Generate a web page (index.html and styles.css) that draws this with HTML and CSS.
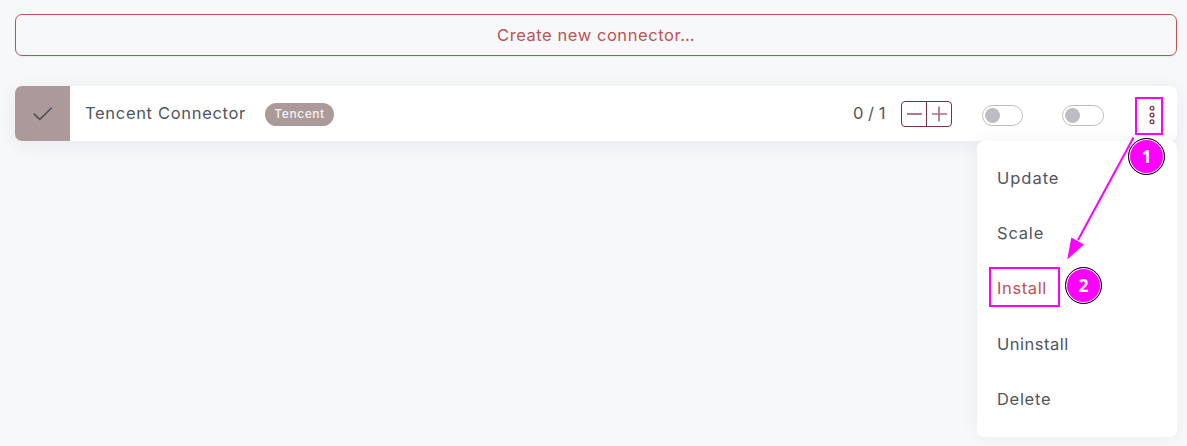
FILE: index.html
```html
<!DOCTYPE html>
<html lang="en">
<head>
<meta charset="utf-8">
<title>Connectors</title>
<link rel="stylesheet" href="styles.css">
</head>
<body>
<main class="page">
  <button class="create">Create new connector…</button>
  <section class="row">
    <div class="status">
      <svg width="20" height="14" viewBox="0 0 20 14"><path d="M.7 6.6 6.8 12.4 18.8.8" fill="none" stroke="#4c4e59" stroke-width="1.5"/></svg>
    </div>
    <span class="name">Tencent Connector</span>
    <span class="tag">Tencent</span>
    <span class="count">0 / 1</span>
    <div class="scale">
      <button class="step"><svg width="17" height="17" viewBox="0 0 17 17"><path d="M1 8h15" stroke="#b0788c" stroke-width="2"/></svg></button>
      <button class="step"><svg width="17" height="17" viewBox="0 0 17 17"><path d="M1 8h15M8 .5v15" stroke="#a86f84" stroke-width="1.7"/></svg></button>
    </div>
    <span class="switch"></span>
    <span class="switch second"></span>
    <button class="more"><svg width="6" height="20" viewBox="0 0 6 20" fill="none" stroke="#7c2d4b" stroke-width="1.3"><circle cx="3" cy="3.2" r="1.9"/><circle cx="3" cy="10" r="1.9"/><circle cx="3" cy="16.8" r="1.9"/></svg></button>
    <nav class="menu">
      <a class="item update">Update</a>
      <a class="item scale-item">Scale</a>
      <a class="item install">Install</a>
      <a class="item uninstall">Uninstall</a>
      <a class="item delete">Delete</a>
    </nav>
  </section>
</main>
<svg class="arrow" width="80" height="130" viewBox="0 0 80 130"><path d="M73.500 7.500 18 110" stroke="#f0f" stroke-width="2" fill="none"/><path d="M7.300 129.500 11.300 107.500 24 114.500Z" fill="#f0f"/></svg>
<div class="mark mark-more"></div>
<div class="mark mark-install"></div>
<div class="badge badge-one">1</div>
<div class="badge badge-two">2</div>
</body>
</html>
```
FILE: styles.css
```css
* { box-sizing: border-box; }
body {
  margin: 0;
  height: 446px;
  overflow: hidden;
  background: #f7f8fa;
  color: #4e5560;
  font: 16.5px/24px Inter, sans-serif;
}
button { margin: 0; padding: 0; border: 0; background: none; font: inherit; }
svg { display: block; }
.page { display: flex; flex-direction: column; gap: 30px; padding: 14px 10px 0 15px; }
.create {
  height: 42px;
  border: 1px solid #bf5154;
  border-radius: 7px;
  color: #bf5154;
  letter-spacing: .56px;
  box-shadow: 0 1px 2px rgba(0, 0, 0, .06);
}
.row {
  position: relative;
  display: flex;
  align-items: center;
  height: 55px;
  background: #fff;
  border-radius: 7px;
  box-shadow: 0 4px 20px rgba(40, 45, 70, .07);
}
.status {
  display: flex;
  align-items: center;
  justify-content: center;
  width: 55px;
  height: 55px;
  background: #ab9a99;
  border-radius: 7px 0 0 7px;
}
.name { width: 180px; margin: 0 0 2px 15px; letter-spacing: .68px; white-space: nowrap; }
.tag {
  width: 69px;
  height: 23px;
  margin-top: 2px;
  border-radius: 12px;
  background: #ab9a99;
  color: #f7f2f2;
  font-size: 12px;
  font-weight: 500;
  line-height: 22px;
  text-align: center;
  letter-spacing: .55px;
}
.count { width: 48px; margin: 0 0 2px 519px; white-space: nowrap; }
.scale {
  display: flex;
  width: 51px;
  height: 26px;
  margin-top: 1px;
  border: 1px solid #7c2d4b;
  border-radius: 4px;
}
.step { display: flex; flex: 1; align-items: center; justify-content: center; }
.step + .step { border-left: 1px solid #7c2d4b; }
.switch {
  width: 41px;
  height: 21px;
  margin: 4px 0 0 30px;
  padding: 2px;
  border: 1px solid #bdbcc1;
  border-radius: 11px;
}
.switch::before {
  content: "";
  display: block;
  width: 15px;
  height: 15px;
  border-radius: 50%;
  background: #bdbcc1;
}
.second { width: 42px; margin-left: 39px; }
.more { margin: 3px 0 0 45px; }
.menu {
  position: absolute;
  top: 55px;
  right: 0;
  width: 200px;
  height: 296px;
  padding: 10px 20px;
  background: #fff;
  border-radius: 7px;
  box-shadow: 0 0 20px rgba(40, 45, 70, .06);
}
.item { display: block; height: 55.25px; line-height: 55px; }
.update { letter-spacing: .97px; }
.scale-item { letter-spacing: .8px; }
.install { color: #bf5154; letter-spacing: .6px; line-height: 53px; }
.uninstall { letter-spacing: .5px; }
.delete { letter-spacing: .7px; }
.arrow { position: absolute; left: 1060px; top: 130px; }
.mark { position: absolute; border: 2px solid #f0f; }
.mark-more { left: 1135px; top: 97px; width: 28px; height: 38px; }
.mark-install { left: 989px; top: 267px; width: 71px; height: 40px; }
.badge {
  position: absolute;
  width: 37px;
  height: 37px;
  border: 1px solid #000;
  border-radius: 50%;
  background: #f0f;
  box-shadow: inset 0 0 0 1px #fff;
  color: #fff;
  font: bold 17px/35px "Open Sans", sans-serif;
  text-align: center;
}
.badge-one { left: 1128px; top: 138px; }
.badge-two { left: 1065px; top: 267px; }
```
